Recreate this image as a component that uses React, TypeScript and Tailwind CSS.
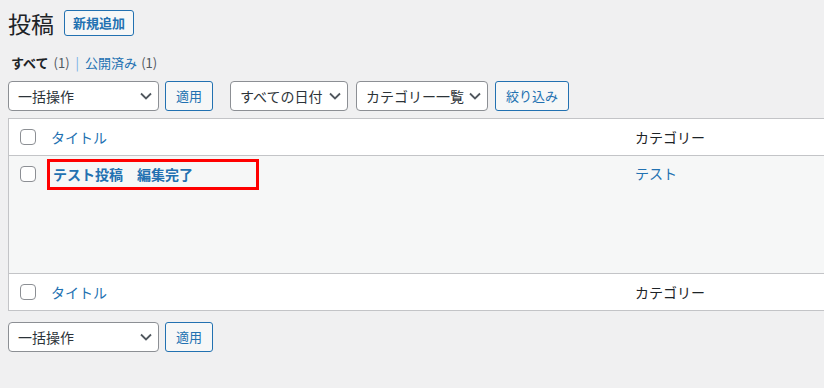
const font = { fontFamily: '"Noto Sans CJK JP", "Noto Sans", sans-serif' }

function Chevron() {
  return (
    <svg width="12" height="8" viewBox="0 0 12 8" className="shrink-0">
      <path d="M1 1.5l5 5 5-5" fill="none" stroke="#50575e" strokeWidth="1.8" />
    </svg>
  )
}

function Select({ label, width }: { label: string; width: string }) {
  return (
    <div
      className={`flex h-[30px] ${width} items-center justify-between rounded-[4px] border border-[#8c8f94] bg-white pl-[9px] pr-[6px] text-[14px] text-[#2c3338]`}
    >
      <span>{label}</span>
      <Chevron />
    </div>
  )
}

function Button({ label }: { label: string }) {
  return (
    <div className="flex h-[30px] items-center rounded-[3px] border border-[#2271b1] bg-[#f6f7f7] px-[10px] text-[13px] text-[#2271b1]">
      {label}
    </div>
  )
}

function Checkbox() {
  return <div className="h-4 w-4 shrink-0 rounded-[4px] border border-[#8c8f94] bg-white" />
}

function HeadRow({ border }: { border: string }) {
  return (
    <div className={`flex h-[37px] items-center bg-white pl-[11px] ${border} border-[#c3c4c7]`}>
      <Checkbox />
      <div className="ml-[15px] w-[584px] text-[14px] text-[#2271b1]">タイトル</div>
      <div className="text-[14px] text-[#1d2327]">カテゴリー</div>
    </div>
  )
}

export default function App() {
  return (
    <div className="h-[388px] w-[824px] overflow-hidden bg-[#f0f0f1] pl-2" style={font}>
      <div className="flex items-center gap-[10px] pt-[10px]">
        <h1 className="text-[23px] leading-[26px] text-[#1d2327]">投稿</h1>
        <div className="flex h-[26px] items-center rounded-[3px] border border-[#2271b1] bg-[#f6f7f7] px-[8px] text-[13px] font-bold text-[#2271b1]">
          新規追加
        </div>
      </div>

      <div className="mt-[18px] flex h-[18px] items-center text-[13px] text-[#50575e]">
        <span className="pl-[3px] font-bold text-[#1d2327]">すべて</span>
        <span className="ml-[5px]">(1)</span>
        <span className="mx-[6px] text-[#72aee6]">|</span>
        <span className="text-[#2271b1]">公開済み</span>
        <span className="ml-[4px]">(1)</span>
      </div>

      <div className="mt-[9px] flex items-center">
        <Select label="一括操作" width="w-[151px]" />
        <div className="ml-[6px]">
          <Button label="適用" />
        </div>
        <div className="ml-[17px]">
          <Select label="すべての日付" width="w-[118px]" />
        </div>
        <div className="ml-[8px]">
          <Select label="カテゴリー一覧" width="w-[132px]" />
        </div>
        <div className="ml-[7px]">
          <Button label="絞り込み" />
        </div>
      </div>

      <div className="mt-[7px] w-[840px] border border-[#c3c4c7]">
        <HeadRow border="border-b" />
        <div className="flex h-[117px] items-start bg-[#f6f7f7] pl-[11px]">
          <div className="pt-[10px]">
            <Checkbox />
          </div>
          <div className="ml-[11px] w-[588px] pt-[3px]">
            <div className="flex h-[31px] w-[212px] items-center border-[3px] border-[#ff0000] pl-[3px] text-[14px] font-bold text-[#2271b1]">
              テスト投稿　編集完了
            </div>
          </div>
          <div className="pt-[7px] text-[14px] text-[#2271b1]">テスト</div>
        </div>
        <HeadRow border="border-t" />
      </div>

      <div className="mt-[11px] flex items-center">
        <Select label="一括操作" width="w-[151px]" />
        <div className="ml-[6px]">
          <Button label="適用" />
        </div>
      </div>
    </div>
  )
}
